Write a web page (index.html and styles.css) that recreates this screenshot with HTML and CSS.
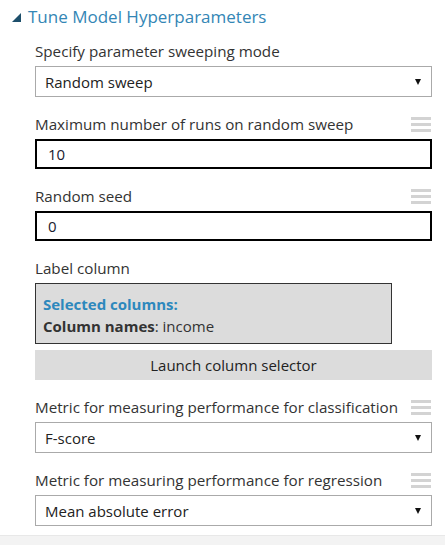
FILE: index.html
```html
<!DOCTYPE html>
<html>
<head>
<meta charset="utf-8">
<link rel="stylesheet" href="styles.css">
</head>
<body>
<div class="panel">
  <div class="header">
    <svg class="caret" width="9" height="9" viewBox="0 0 9 9"><polygon points="9,0 9,9 0,9" fill="#1d4f6b"/></svg>
    <span class="title">Tune Model Hyperparameters</span>
  </div>
  <div class="content">
    <div class="field">
      <div class="label-row"><span class="label">Specify parameter sweeping mode</span></div>
      <div class="select"><span>Random sweep</span><span class="arrow"></span></div>
    </div>
    <div class="field">
      <div class="label-row"><span class="label">Maximum number of runs on random sweep</span><span class="menu"><i></i><i></i><i></i></span></div>
      <div class="input">10</div>
    </div>
    <div class="field">
      <div class="label-row"><span class="label">Random seed</span><span class="menu"><i></i><i></i><i></i></span></div>
      <div class="input">0</div>
    </div>
    <div class="field">
      <div class="label-row"><span class="label">Label column</span></div>
      <div class="colbox">
        <div class="sel-title">Selected columns:</div>
        <div class="sel-line"><b>Column names</b>: income</div>
      </div>
      <div class="button">Launch column selector</div>
    </div>
    <div class="field">
      <div class="label-row"><span class="label">Metric for measuring performance for classification</span><span class="menu"><i></i><i></i><i></i></span></div>
      <div class="select"><span>F-score</span><span class="arrow"></span></div>
    </div>
    <div class="field">
      <div class="label-row"><span class="label">Metric for measuring performance for regression</span><span class="menu"><i></i><i></i><i></i></span></div>
      <div class="select"><span>Mean absolute error</span><span class="arrow"></span></div>
    </div>
  </div>
</div>
<div class="footer"></div>
</body>
</html>
```
FILE: styles.css
```css
html, body {
  margin: 0;
  padding: 0;
  background: #fff;
}
body {
  font-family: "Open Sans", "Noto Sans", sans-serif;
  color: #333;
  width: 445px;
  height: 545px;
  display: flex;
  flex-direction: column;
  overflow: hidden;
}
.panel {
  height: 536px;
  border-bottom: 1px solid #e8e8e8;
  box-sizing: border-box;
}
.footer {
  flex: 1;
  background: #f3f3f3;
}
.header {
  display: flex;
  align-items: center;
  height: 32px;
  padding-left: 12px;
  gap: 7px;
}
.caret {
  display: block;
  margin-top: 2px;
}
.title {
  color: #3386b5;
  font-size: 17px;
  font-weight: 400;
}
.content {
  padding: 9px 13px 0 35px;
  display: flex;
  flex-direction: column;
  gap: 17px;
}
.field {
  display: flex;
  flex-direction: column;
}
.label-row {
  display: flex;
  justify-content: space-between;
  align-items: center;
  height: 20px;
  margin-bottom: 5px;
}
.label {
  font-size: 15.2px;
  color: #333;
  white-space: nowrap;
}
.menu {
  display: flex;
  flex-direction: column;
  gap: 3px;
  width: 20px;
  flex: none;
  margin-right: 1px;
  margin-top: 1px;
}
.menu i {
  display: block;
  height: 3px;
  background: #d3d3d3;
}
.select {
  height: 31px;
  box-sizing: border-box;
  border: 1px solid #aaa;
  display: flex;
  align-items: center;
  justify-content: space-between;
  padding: 0 10px 0 9px;
  font-size: 15px;
  color: #222;
}
.arrow {
  width: 0;
  height: 0;
  border-left: 3px solid transparent;
  border-right: 3px solid transparent;
  border-top: 6px solid #111;
}
.input {
  height: 30px;
  box-sizing: border-box;
  border: 2px solid #000;
  display: flex;
  align-items: center;
  padding-left: 11px;
  font-size: 15px;
  color: #1a1a2e;
}
.colbox {
  width: 357px;
  height: 61px;
  box-sizing: border-box;
  background: #dcdcdc;
  border: 1px solid #333;
  padding: 9px 7px 0;
  font-size: 15px;
  line-height: 22px;
}
.sel-title {
  color: #2d88bd;
  font-weight: 700;
}
.sel-line {
  color: #333;
}
.sel-line b {
  font-weight: 700;
}
.button {
  margin-top: 6px;
  height: 30px;
  background: #dcdcdc;
  display: flex;
  align-items: center;
  justify-content: center;
  font-size: 15px;
  color: #222;
}
```
